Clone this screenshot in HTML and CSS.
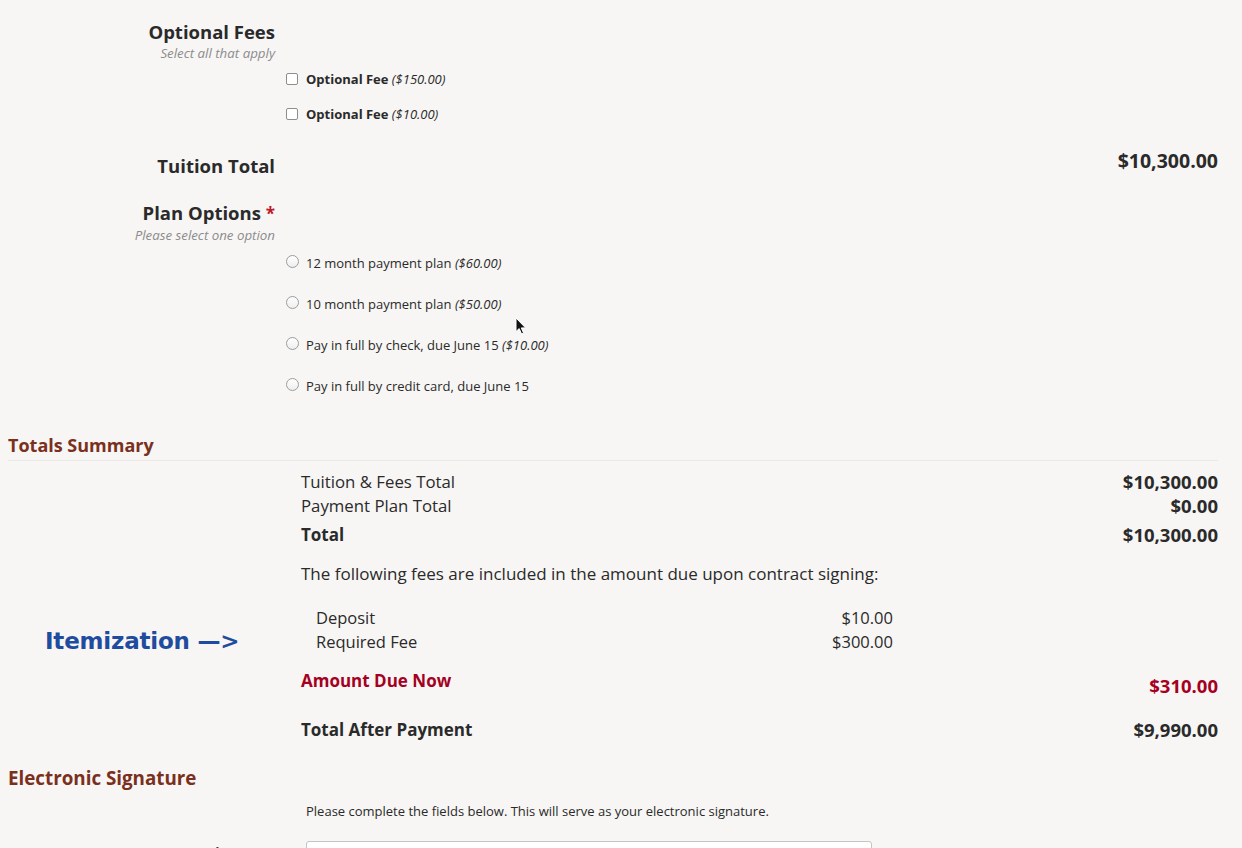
FILE: index.html
```html
<!DOCTYPE html>
<html lang="en">
<head>
<meta charset="utf-8">
<title>Tuition Contract</title>
<link rel="stylesheet" href="styles.css">
</head>
<body>
<div class="page">
  <div class="field">
    <div class="label">
      <div class="label-title">Optional Fees</div>
      <div class="label-sub">Select all that apply</div>
    </div>
    <div class="options checks">
      <label class="option"><input type="checkbox" class="check"><span class="opt-text"><b>Optional Fee</b> <i>($150.00)</i></span></label>
      <label class="option"><input type="checkbox" class="check"><span class="opt-text"><b>Optional Fee</b> <i>($10.00)</i></span></label>
    </div>
  </div>

  <div class="field total-field">
    <div class="label">
      <div class="label-title">Tuition Total</div>
    </div>
    <div class="field-value">$10,300.00</div>
  </div>

  <div class="field plan-field">
    <div class="label">
      <div class="label-title">Plan Options <span class="req">*</span></div>
      <div class="label-sub">Please select one option</div>
    </div>
    <div class="options radios">
      <label class="option"><input type="radio" name="plan" class="radio"><span class="opt-text">12 month payment plan <i>($60.00)</i></span></label>
      <label class="option"><input type="radio" name="plan" class="radio"><span class="opt-text">10 month payment plan <i>($50.00)</i></span></label>
      <label class="option"><input type="radio" name="plan" class="radio"><span class="opt-text">Pay in full by check, due June 15 <i>($10.00)</i></span></label>
      <label class="option"><input type="radio" name="plan" class="radio"><span class="opt-text">Pay in full by credit card, due June 15</span></label>
    </div>
  </div>

  <h2 class="section-title">Totals Summary</h2>
  <div class="summary">
    <div class="sum-row"><span>Tuition &amp; Fees Total</span><span class="amt">$10,300.00</span></div>
    <div class="sum-row"><span>Payment Plan Total</span><span class="amt">$0.00</span></div>
    <div class="sum-row sum-total"><span>Total</span><span class="amt">$10,300.00</span></div>
    <p class="sum-note">The following fees are included in the amount due upon contract signing:</p>
  </div>
  <div class="itemization">
    <div class="annot">Itemization —&gt;</div>
    <div class="items">
      <div class="item"><span>Deposit</span><span>$10.00</span></div>
      <div class="item"><span>Required Fee</span><span>$300.00</span></div>
    </div>
  </div>
  <div class="summary">
    <div class="sum-row due"><span>Amount Due Now</span><span class="amt due-amt">$310.00</span></div>
    <div class="sum-row after"><span>Total After Payment</span><span class="amt">$9,990.00</span></div>
  </div>

  <h2 class="section-title sig-title">Electronic Signature</h2>
  <div class="sig">
    <p class="sig-note">Please complete the fields below. This will serve as your electronic signature.</p>
    <div class="sig-row">
      <label class="sig-label" for="signame">Signature</label>
      <input id="signame" class="sig-input" type="text">
    </div>
  </div>

  <svg class="cursor" width="12" height="18" viewBox="0 0 12 18" aria-hidden="true">
    <path d="M1 1 L1 14.5 L4.2 11.6 L6.6 17 L8.6 16.1 L6.3 10.9 L10.6 10.9 Z" fill="#111" stroke="#fff" stroke-width="1"/>
  </svg>
</div>
</body>
</html>
```

FILE: styles.css
```css
html, body {
  margin: 0;
  padding: 0;
}
body {
  background: #f7f6f4;
  font-family: "Open Sans", Lato, "Liberation Sans", sans-serif;
  color: #2a2a2a;
}
.page {
  position: relative;
  width: 1242px;
  height: 848px;
  overflow: hidden;
  box-sizing: border-box;
  padding: 20px 24px 0 8px;
}

/* form fields */
.field {
  display: grid;
  grid-template-columns: 267px 1fr;
  column-gap: 11px;
}
.label {
  grid-column: 1;
  grid-row: 1;
  text-align: right;
}
.label-title {
  font-size: 18.5px;
  font-weight: 700;
  line-height: 24px;
  color: #2a2a2a;
}
.req {
  color: #c0182b;
  font-size: 17px;
}
.label-sub {
  font-size: 13.3px;
  font-style: italic;
  line-height: 18px;
  color: #8c8c8c;
  margin-top: 0;
}
.options {
  grid-column: 2;
  grid-row: 2;
  display: flex;
  flex-direction: column;
}
.option {
  display: flex;
  align-items: center;
  font-size: 13px;
  color: #2a2a2a;
}
.checks .option {
  height: 35px;
}
.radios .option {
  height: 41px;
}
.opt-text i {
  font-style: italic;
}
.opt-text b {
  font-weight: 700;
}
.check {
  appearance: none;
  -webkit-appearance: none;
  width: 12px;
  height: 12px;
  margin: 1px 8px 0 0;
  border: 1px solid #8e8e8e;
  border-radius: 2px;
  background: #fff;
  box-sizing: border-box;
}
.radio {
  appearance: none;
  -webkit-appearance: none;
  width: 13px;
  height: 13px;
  margin: -3px 7px 0 0;
  border: 1px solid #9c9c9c;
  border-radius: 50%;
  background: linear-gradient(#ffffff, #eeeeee);
  box-sizing: border-box;
}
.options.checks {
  margin-top: -1px;
}
.total-field {
  margin-top: 23px;
}
.field-value {
  grid-column: 2;
  grid-row: 1;
  text-align: right;
  font-size: 19.5px;
  font-weight: 700;
  line-height: 20px;
  margin-top: -3px;
}
.plan-field {
  margin-top: 23px;
}
.options.radios {
  margin-top: -2px;
}

/* sections */
.section-title {
  margin: 28px 0 0;
  font-size: 18px;
  font-weight: 700;
  line-height: 22px;
  color: #7a301d;
  padding-bottom: 4px;
  border-bottom: 1px solid #ebe9e5;
}
.summary {
  padding-left: 293px;
}
.sum-row {
  display: flex;
  justify-content: space-between;
  align-items: flex-start;
  font-size: 16.8px;
  line-height: 24px;
}
.sum-row:first-child {
  margin-top: 9px;
}
.amt {
  font-weight: 700;
  font-size: 18.5px;
}
.sum-total {
  margin-top: 5px;
  font-weight: 700;
  font-size: 17px;
}
.sum-note {
  margin: 15px 0 0;
  font-size: 17px;
  line-height: 24px;
}
.itemization {
  display: grid;
  grid-template-columns: 293px 592px;
  margin-top: 20px;
  align-items: center;
}
.annot {
  padding-left: 37px;
  padding-top: 22px;
  font-family: "DejaVu Sans", Verdana, sans-serif;
  font-weight: 700;
  font-size: 23px;
  line-height: 24px;
  color: #1f4c9f;
  letter-spacing: -0.2px;
}
.items {
  padding-left: 15px;
}
.item {
  display: flex;
  justify-content: space-between;
  font-size: 16.5px;
  line-height: 24px;
}
.sum-row.due {
  margin-top: 15px;
  color: #a5001f;
  font-weight: 700;
  font-size: 17px;
}
.due-amt {
  margin-top: 5px;
}
.sum-row.after {
  margin-top: 20px;
  font-weight: 700;
  font-size: 17px;
}
.sig-title {
  margin-top: 25px;
  font-size: 18.8px;
  border-bottom-color: transparent;
}
.sig {
  padding-left: 298px;
}
.sig-note {
  margin: 8px 0 0;
  font-size: 13px;
  line-height: 18px;
}
.sig-row {
  position: relative;
  margin-top: 21px;
}
.sig-label {
  position: absolute;
  right: 100%;
  margin-right: 31px;
  top: 2px;
  font-size: 14px;
  font-weight: 700;
  white-space: nowrap;
}
.sig-input {
  display: block;
  width: 566px;
  height: 32px;
  box-sizing: border-box;
  border: 1px solid #c4c4c4;
  border-radius: 3px;
  background: #fff;
  margin: 0;
}

.cursor {
  position: absolute;
  left: 515px;
  top: 317px;
}
```
